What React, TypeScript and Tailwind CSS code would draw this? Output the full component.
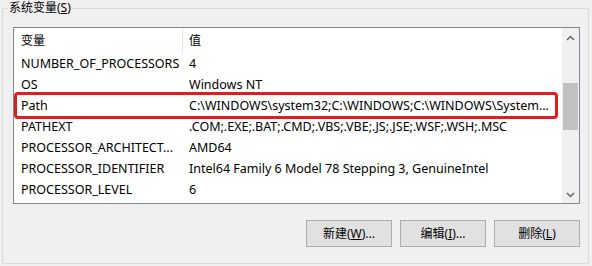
import { ReactNode } from "react";

const rows: [string, string][] = [
  ["NUMBER_OF_PROCESSORS", "4"],
  ["OS", "Windows NT"],
  ["Path", "C:\\WINDOWS\\system32;C:\\WINDOWS;C:\\WINDOWS\\System..."],
  ["PATHEXT", ".COM;.EXE;.BAT;.CMD;.VBS;.VBE;.JS;.JSE;.WSF;.WSH;.MSC"],
  ["PROCESSOR_ARCHITECT...", "AMD64"],
  ["PROCESSOR_IDENTIFIER", "Intel64 Family 6 Model 78 Stepping 3, GenuineIntel"],
  ["PROCESSOR_LEVEL", "6"],
];

const font = "font-['Noto_Sans','Noto_Sans_CJK_SC',sans-serif]";

function WinButton({ children }: { children: ReactNode }) {
  return (
    <button className="w-[86px] h-[27px] border border-[#adadad] bg-[#e1e1e1] text-[12px] text-black leading-none flex items-center justify-center">
      {children}
    </button>
  );
}

function Chevron({ up }: { up?: boolean }) {
  return (
    <svg width="9" height="6" viewBox="0 0 9 6" className="block">
      <path
        d={up ? "M1 5 L4.5 1.5 L8 5" : "M1 1 L4.5 4.5 L8 1"}
        fill="none"
        stroke="#606060"
        strokeWidth="1.4"
      />
    </svg>
  );
}

export default function App() {
  return (
    <div className={`w-[592px] h-[266px] bg-[#f0f0f0] overflow-hidden pt-[8px] pl-[2px] ${font}`}>
      {/* group box */}
      <div className="relative w-[587px] h-[256px] border border-[#dcdcdc] pt-[18px] pl-[10px]">
        <span className="absolute left-[5px] -top-[9px] px-[1px] bg-[#f0f0f0] text-[12px] leading-[16px] text-black">
          系统变量(<span className="underline">S</span>)
        </span>

        {/* list box */}
        <div className="w-[567px] h-[177px] border border-[#828790] bg-white flex">
          <div className="relative flex-1 text-[12.5px] text-black">
            <div className="h-[26px] flex items-center text-[12px]">
              <div className="w-[169px] h-full pl-[7px] flex items-center border-r border-[#e5e5e5]">变量</div>
              <div className="pl-[6px]">值</div>
            </div>
            {rows.map(([name, value]) => (
              <div key={name} className="h-[21px] flex items-center whitespace-nowrap">
                <div className="w-[169px] pl-[7px]">{name}</div>
                <div className="pl-[6px]">{value}</div>
              </div>
            ))}
            <div className="absolute left-0 top-[64px] w-[544px] h-[27px] border-[3px] border-[#e41c1c] rounded-[4px]" />
          </div>

          {/* scrollbar */}
          <div className="w-[17px] bg-[#f0f0f0] flex flex-col items-center">
            <div className="h-[17px] flex items-center justify-center mt-[1px]">
              <Chevron up />
            </div>
            <div className="mt-[37px] w-[15px] h-[47px] bg-[#c1c1c1]" />
            <div className="flex-1" />
            <div className="h-[17px] flex items-center justify-center">
              <Chevron />
            </div>
          </div>
        </div>

        {/* buttons */}
        <div className="w-[567px] mt-[16px] flex justify-end gap-[8px]">
          <WinButton>
            新建(<span className="underline">W</span>)...
          </WinButton>
          <WinButton>
            编辑(<span className="underline">I</span>)...
          </WinButton>
          <WinButton>
            删除(<span className="underline">L</span>)
          </WinButton>
        </div>
      </div>
    </div>
  );
}
